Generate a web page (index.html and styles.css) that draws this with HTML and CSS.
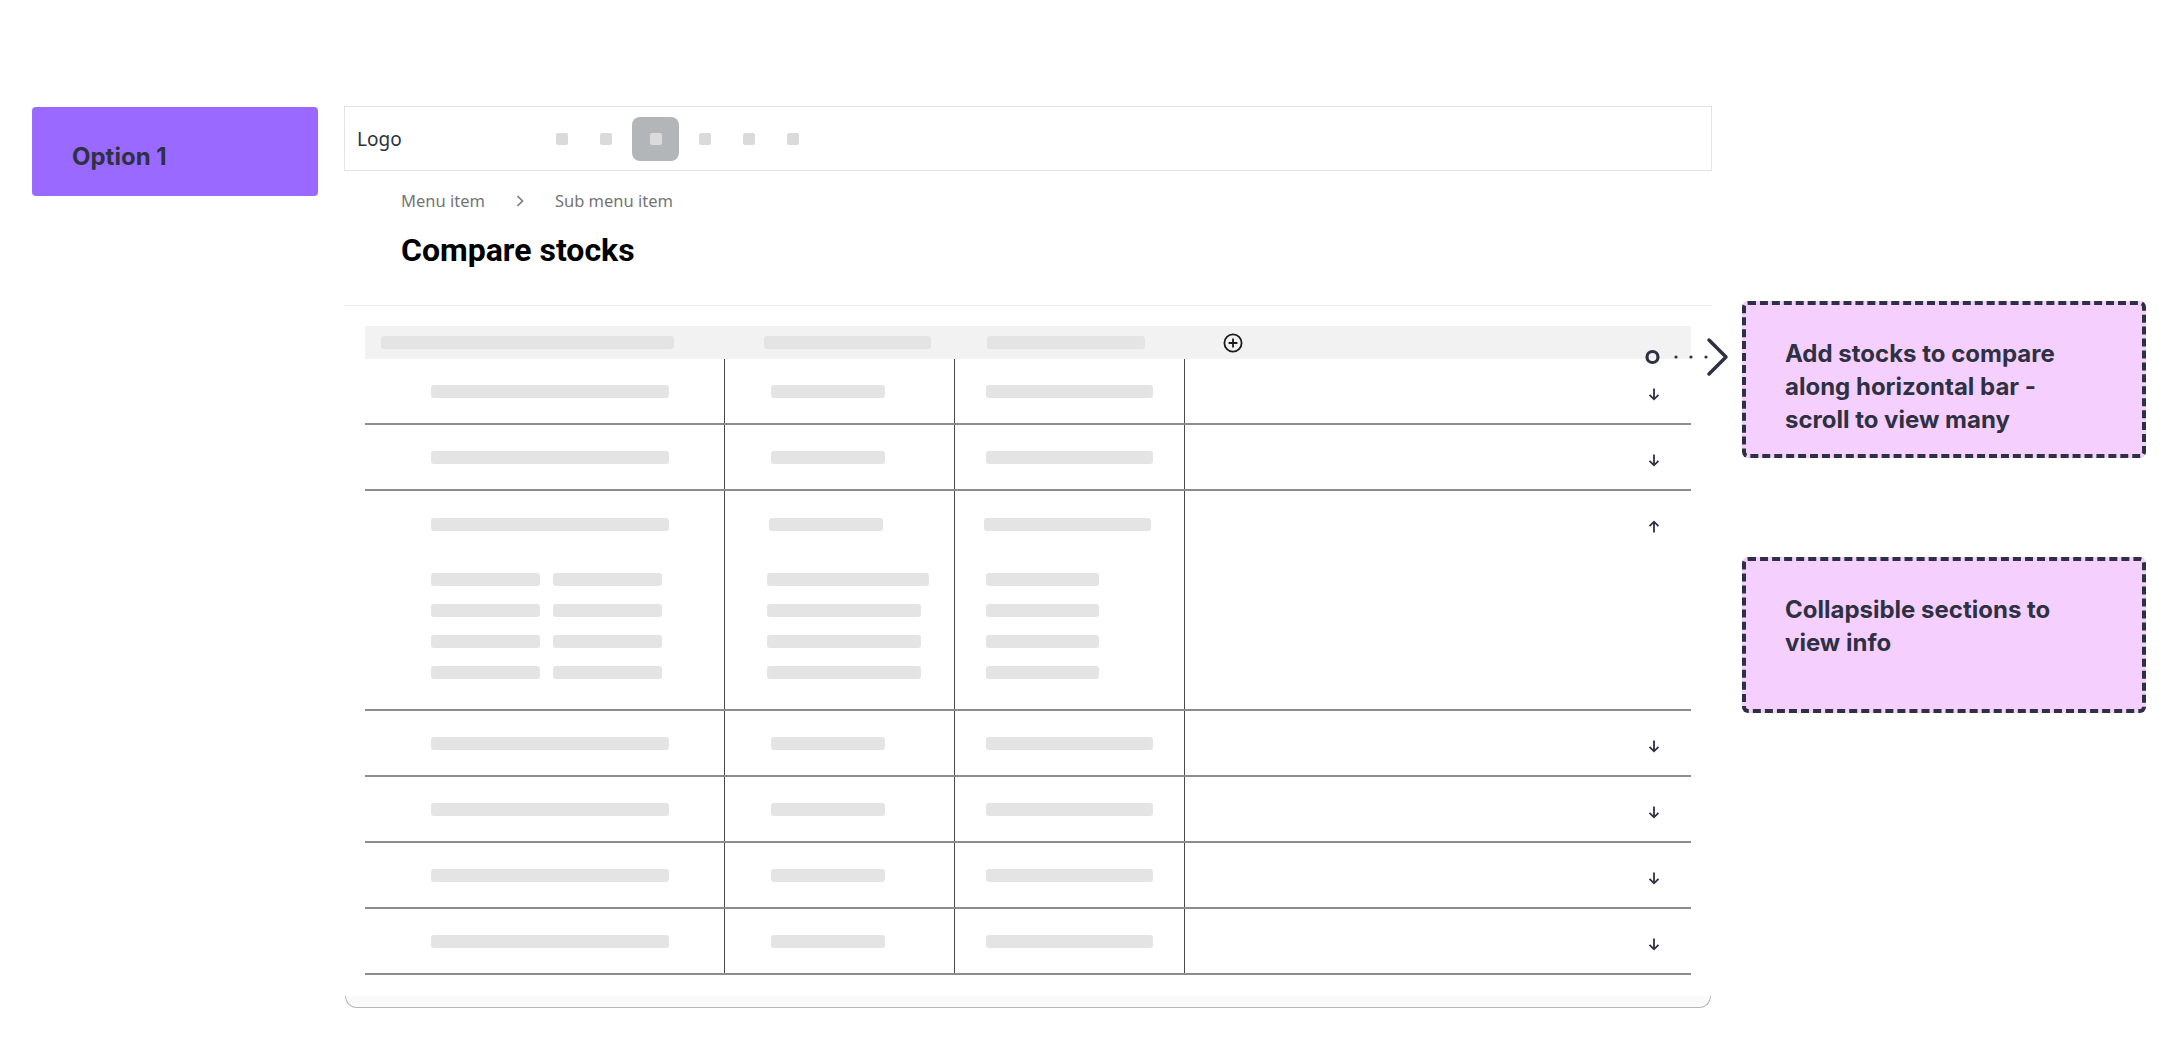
FILE: index.html
```html
<!doctype html>
<html lang="en">
<head>
    <meta charset="utf-8">
    <meta name="viewport" content="width=device-width, initial-scale=1">
    <title>Compare stocks - wireframe</title>
    <link rel="stylesheet" href="styles.css">
</head>
<body>
    <div class="page">
        <div class="option">Option 1</div>

        <main class="screen">
            <nav class="topbar">
                <span class="logo">Logo</span>
                <div class="nav-icons">
                    <span class="nav-item"><i></i></span>
                    <span class="nav-item"><i></i></span>
                    <span class="nav-item active"><i></i></span>
                    <span class="nav-item"><i></i></span>
                    <span class="nav-item"><i></i></span>
                    <span class="nav-item"><i></i></span>
                </div>
            </nav>

            <div class="crumbs">
                <span>Menu item</span>
                <svg width="8" height="12" viewBox="0 0 8 12"><path d="M1.5 1 L6.5 6 L1.5 11" fill="none" stroke="#777" stroke-width="1.6"/></svg>
                <span>Sub menu item</span>
            </div>
            <h1>Compare stocks</h1>

            <section class="card">
                <div class="compare">
                    <div class="compare-head">
                        <div class="hcell c1"><span class="bar w293"></span></div>
                        <div class="hcell c2"><span class="bar w167"></span></div>
                        <div class="hcell c3"><span class="bar w158"></span></div>
                        <div class="hcell c4">
                            <svg class="add" width="20" height="20" viewBox="0 0 20 20"><circle cx="10" cy="10" r="8.6" fill="none" stroke="#1b1b1b" stroke-width="1.8"/><path d="M10 5.6 V14.4 M5.6 10 H14.4" stroke="#1b1b1b" stroke-width="1.8"/></svg>
                        </div>
                    </div>

                    <div class="row">
                        <div class="cell c1"><span class="bar w238"></span></div>
                        <div class="cell c2"><span class="bar w114"></span></div>
                        <div class="cell c3"><span class="bar w167"></span></div>
                        <div class="cell c4"><svg class="arrow" width="14" height="14" viewBox="0 0 14 14"><path d="M7 1.5 V12 M2.5 7.8 L7 12.3 L11.5 7.8" fill="none" stroke="#2d3142" stroke-width="1.8"/></svg></div>
                    </div>
                    <div class="row">
                        <div class="cell c1"><span class="bar w238"></span></div>
                        <div class="cell c2"><span class="bar w114"></span></div>
                        <div class="cell c3"><span class="bar w167"></span></div>
                        <div class="cell c4"><svg class="arrow" width="14" height="14" viewBox="0 0 14 14"><path d="M7 1.5 V12 M2.5 7.8 L7 12.3 L11.5 7.8" fill="none" stroke="#2d3142" stroke-width="1.8"/></svg></div>
                    </div>

                    <!-- expanded section -->
                    <div class="row open">
                        <div class="cell c1">
                            <span class="bar w238"></span>
                            <div class="details two">
                                <span class="bar w109"></span><span class="bar w109"></span>
                                <span class="bar w109"></span><span class="bar w109"></span>
                                <span class="bar w109"></span><span class="bar w109"></span>
                                <span class="bar w109"></span><span class="bar w109"></span>
                            </div>
                        </div>
                        <div class="cell c2">
                            <span class="bar w114 nudge"></span>
                            <div class="details">
                                <span class="bar w162"></span>
                                <span class="bar w154"></span>
                                <span class="bar w154"></span>
                                <span class="bar w154"></span>
                            </div>
                        </div>
                        <div class="cell c3">
                            <span class="bar w167"></span>
                            <div class="details nudge">
                                <span class="bar w113"></span>
                                <span class="bar w113"></span>
                                <span class="bar w113"></span>
                                <span class="bar w113"></span>
                            </div>
                        </div>
                        <div class="cell c4"><svg class="arrow" width="14" height="14" viewBox="0 0 14 14"><path d="M7 12.5 V2 M2.5 6.2 L7 1.7 L11.5 6.2" fill="none" stroke="#2d3142" stroke-width="1.8"/></svg></div>
                    </div>

                    <div class="row">
                        <div class="cell c1"><span class="bar w238"></span></div>
                        <div class="cell c2"><span class="bar w114"></span></div>
                        <div class="cell c3"><span class="bar w167"></span></div>
                        <div class="cell c4"><svg class="arrow" width="14" height="14" viewBox="0 0 14 14"><path d="M7 1.5 V12 M2.5 7.8 L7 12.3 L11.5 7.8" fill="none" stroke="#2d3142" stroke-width="1.8"/></svg></div>
                    </div>
                    <div class="row">
                        <div class="cell c1"><span class="bar w238"></span></div>
                        <div class="cell c2"><span class="bar w114"></span></div>
                        <div class="cell c3"><span class="bar w167"></span></div>
                        <div class="cell c4"><svg class="arrow" width="14" height="14" viewBox="0 0 14 14"><path d="M7 1.5 V12 M2.5 7.8 L7 12.3 L11.5 7.8" fill="none" stroke="#2d3142" stroke-width="1.8"/></svg></div>
                    </div>
                    <div class="row">
                        <div class="cell c1"><span class="bar w238"></span></div>
                        <div class="cell c2"><span class="bar w114"></span></div>
                        <div class="cell c3"><span class="bar w167"></span></div>
                        <div class="cell c4"><svg class="arrow" width="14" height="14" viewBox="0 0 14 14"><path d="M7 1.5 V12 M2.5 7.8 L7 12.3 L11.5 7.8" fill="none" stroke="#2d3142" stroke-width="1.8"/></svg></div>
                    </div>
                    <div class="row">
                        <div class="cell c1"><span class="bar w238"></span></div>
                        <div class="cell c2"><span class="bar w114"></span></div>
                        <div class="cell c3"><span class="bar w167"></span></div>
                        <div class="cell c4"><svg class="arrow" width="14" height="14" viewBox="0 0 14 14"><path d="M7 1.5 V12 M2.5 7.8 L7 12.3 L11.5 7.8" fill="none" stroke="#2d3142" stroke-width="1.8"/></svg></div>
                    </div>
                </div>
                <div class="card-foot"></div>
            </section>
        </main>

        <aside class="notes">
            <div class="note">
                <svg class="pointer" width="90" height="42" viewBox="0 0 90 42">
                    <circle cx="12.5" cy="20" r="5.5" fill="none" stroke="#2d3142" stroke-width="3.2"/>
                    <circle cx="36" cy="20" r="1.6" fill="#2d3142"/>
                    <circle cx="51" cy="20" r="1.6" fill="#2d3142"/>
                    <circle cx="66" cy="20" r="1.6" fill="#2d3142"/>
                    <path d="M69 3 L86 20 L69 37" fill="none" stroke="#2d3142" stroke-width="3.5" stroke-linecap="round" stroke-linejoin="round"/>
                </svg>
                Add stocks to compare along horizontal bar - scroll to view many
            </div>
            <div class="note">Collapsible sections to view info</div>
        </aside>
    </div>
</body>
</html>
```

FILE: styles.css
```css
* {
    margin: 0;
    padding: 0;
    box-sizing: border-box;
}

body {
    font-family: "Noto Sans", sans-serif;
    background-color: white;
    color: #2d3142;
}

.page {
    display: flex;
    align-items: flex-start;
    padding: 106px 0 0 32px;
}

.option {
    width: 286px;
    height: 89px;
    margin-top: 1px;
    padding: 35px 0 0 40px;
    background-color: #9a69ff;
    border-radius: 4px;
    font-family: "Inter", sans-serif;
    font-weight: 700;
    font-size: 24px;
    line-height: 29px;
}

.screen {
    width: 1368px;
    margin-left: 26px;
}

/* top bar */
.topbar {
    display: flex;
    align-items: center;
    height: 65px;
    padding-left: 12px;
    border: 1px solid #e3e3e3;
}

.logo {
    width: 187px;
    font-size: 19px;
}

.nav-icons {
    display: flex;
    gap: 8px;
}

.nav-item {
    display: flex;
    align-items: center;
    justify-content: center;
    width: 36px;
    height: 44px;
    border-radius: 8px;
}

.nav-item i {
    width: 12px;
    height: 12px;
    background-color: #dadada;
    border-radius: 2px;
}

.nav-item.active {
    width: 47px;
    background-color: #b2b6b8;
}

/* heading */
.crumbs {
    display: flex;
    align-items: center;
    gap: 31px;
    margin-top: 18px;
    padding-left: 57px;
    font-size: 16.5px;
    line-height: 24px;
    color: #757575;
}

h1 {
    margin-top: 17px;
    padding-left: 57px;
    font-family: "Roboto", sans-serif;
    font-weight: 700;
    font-size: 32px;
    line-height: 40px;
    color: black;
}

/* comparison card */
.card {
    margin-top: 35px;
    padding: 20px 21px 0;
    border-top: 1px solid #ededed;
}

.compare-head,
.row {
    display: grid;
    grid-template-columns: 359px 230px 230px 1fr;
}

.compare-head {
    height: 33px;
    align-items: center;
    background-color: #f2f2f2;
}

.hcell {
    display: flex;
    align-items: center;
}

.hcell.c1 { padding-left: 16px; }
.hcell.c2 { padding-left: 40px; }
.hcell.c3 { padding-left: 33px; }
.hcell.c4 { padding-left: 39px; }

.row {
    height: 66px;
    border-bottom: 2px solid #8c8c8c;
}

.cell {
    display: flex;
    align-items: center;
}

.cell + .cell {
    border-left: 1px solid #4a4a4a;
}

.cell.c1 { padding-left: 66px; }
.cell.c2 { padding-left: 46px; }
.cell.c3 { padding-left: 31px; }
.cell.c4 {
    justify-content: flex-end;
    padding: 5px 30px 0 0;
}

.row.open {
    height: 220px;
}

.row.open .cell {
    flex-direction: column;
    justify-content: flex-start;
    align-items: flex-start;
    padding-top: 27px;
}

.row.open .cell.c2 { padding-left: 42px; }
.row.open .cell.c3 { padding-left: 29px; }

.row.open .cell.c4 {
    align-items: flex-end;
    padding-top: 29px;
}

.details {
    display: flex;
    flex-direction: column;
    gap: 18px;
    margin-top: 42px;
}

.details.two {
    display: grid;
    grid-template-columns: 109px 109px;
    column-gap: 13px;
    row-gap: 18px;
}

.nudge {
    margin-left: 2px;
}

.bar {
    display: block;
    height: 13px;
    background-color: #e4e4e4;
    border-radius: 3px;
}

.w293 { width: 293px; }
.w238 { width: 238px; }
.w167 { width: 167px; }
.w162 { width: 162px; }
.w158 { width: 158px; }
.w154 { width: 154px; }
.w114 { width: 114px; }
.w113 { width: 113px; }
.w109 { width: 109px; }

.arrow,
.add {
    display: block;
}

.card-foot {
    height: 12px;
    margin: 21px -20px 0;
    background-color: #fafafa;
    border: 1px solid #b5b5b5;
    border-top: none;
    border-radius: 0 0 12px 12px;
}

/* annotations */
.notes {
    display: flex;
    flex-direction: column;
    gap: 99px;
    width: 404px;
    margin: 195px 0 0 30px;
}

.note {
    position: relative;
    height: 157px;
    padding: 32px 60px 0 39px;
    background-color: #f5d0fe;
    border: 4px dashed #2d3142;
    border-radius: 6px;
    font-family: "Inter", sans-serif;
    font-weight: 700;
    font-size: 24px;
    line-height: 33px;
}

.note + .note {
    height: 156px;
}

.pointer {
    position: absolute;
    left: -106px;
    top: 32px;
}
```
